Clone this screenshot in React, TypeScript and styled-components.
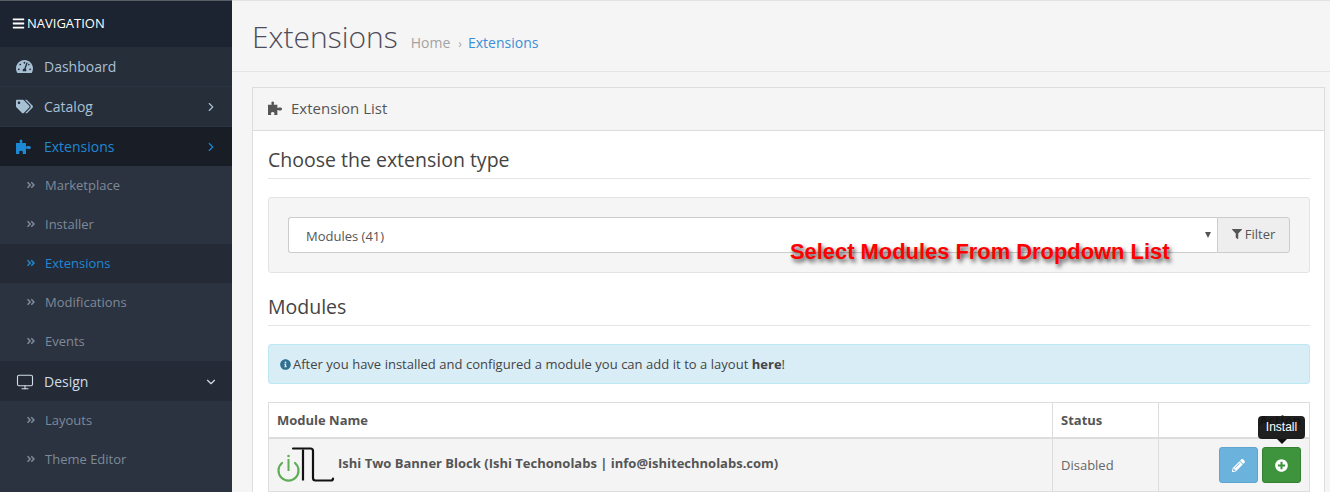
import React from "react";
import styled, { createGlobalStyle } from "styled-components";
import { FaAngleDoubleRight, FaBars, FaTags, FaFilter, FaPencilAlt, FaPlusCircle, FaInfoCircle, FaTachometerAlt } from "react-icons/fa";
import { ChevronRight, ChevronDown, Monitor } from "lucide-react";

const Global = createGlobalStyle`
  html, body { margin: 0; padding: 0; height: 100%; overflow: hidden; background: #f5f5f5; }
  body { font-family: "Open Sans", sans-serif; font-size: 13px; color: #4d4d4d; }
`;

const Page = styled.div`
  display: flex; width: 1330px; height: 492px; overflow: hidden; background: #f5f5f5;
`;
const Sidebar = styled.nav`
  width: 232px; flex: none; background: #2b3240; display: flex; flex-direction: column;
  border-top: 1px solid #5a5f66; box-sizing: border-box;
`;
const NavHeader = styled.div`
  height: 46px; flex: none; background: #1c2331; color: #fff; display: flex; align-items: center;
  padding: 0 0 2px 12px; gap: 2px; font-size: 13px; box-sizing: border-box;
`;
const TopItem = styled.div<{ $state?: "active" | "open" }>`
  height: ${p => (p.$state === "active" ? "39px" : "40px")}; flex: none; display: flex; align-items: center;
  padding: ${p => (p.$state === "open" ? "1px" : "0")} 14px 0 16px; box-sizing: border-box;
  border-bottom: ${p => (p.$state ? "0" : "1px solid #2a3542")};
  background: ${p => (p.$state === "active" ? "#191d26" : p.$state === "open" ? "#252b36" : "#262e3a")};
  color: ${p => (p.$state === "active" ? "#1e88d2" : p.$state === "open" ? "#cfdde8" : "#a8c0d4")};
  font-size: 14px;
`;
const TopIcon = styled.span`
  width: 28px; flex: none; display: flex; align-items: center; font-size: 17px;
`;
const Grow = styled.span`flex: 1;`;
const Arrow = styled.span`display: flex; align-items: center;`;
const SubItem = styled.div<{ $active?: boolean }>`
  height: 39px; flex: none; display: flex; align-items: center; padding: 0 0 2px 26px; gap: 9px; box-sizing: border-box;
  background: ${p => (p.$active ? "#252b36" : "transparent")};
  color: ${p => (p.$active ? "#1e88d2" : "#7d8a99")};
  font-size: 13px;
`;
const SubIcon = styled.span`display: flex; font-size: 10px; width: 10px;`;

const Main = styled.main`
  flex: 1; min-width: 0; display: flex; flex-direction: column;
  border-top: 1px solid #e2e2e2; box-sizing: border-box;
`;
const Header = styled.header`
  height: 71px; flex: none; box-sizing: border-box; border-bottom: 1px solid #e5e5e5;
  padding: 15px 20px 0; display: flex; align-items: flex-start;
`;
const Title = styled.h1`
  margin: 0; font-size: 30px; font-weight: 300; color: #4d4d5a; line-height: 41px;
`;
const Crumbs = styled.div`
  margin: 17px 0 0 13px; display: flex; align-items: baseline; font-size: 14px; line-height: 20px; color: #a3a3a3;
`;
const CrumbSep = styled.span`margin: 0 6px 0 8px; font-size: 12px; color: #aaa;`;
const CrumbLink = styled.span`color: #3b8fd6;`;
const Panel = styled.section`
  margin: 15px 5px 0 20px; border: 1px solid #ddd; background: #fff; flex: 1; min-height: 0;
  border-bottom: 0; position: relative;
`;
const PanelHead = styled.div`
  height: 43px; box-sizing: border-box; background: #f5f5f5; border-bottom: 1px solid #ddd;
  display: flex; align-items: center; padding: 0 0 2px 15px; gap: 8px; font-size: 15px; color: #555;
`;
const PanelBody = styled.div`padding: 15px 14px 0 15px;`;
const SectionTitle = styled.h3<{ $spaced?: boolean }>`
  margin: ${p => (p.$spaced ? "20px" : "0")} 0 18px; font-size: 19.5px; font-weight: 400; color: #444; line-height: 28px;
  border-bottom: 1px solid #e5e5e5; height: 33px; box-sizing: border-box;
`;
const Well = styled.div`
  height: 76px; box-sizing: border-box; background: #f5f5f5; border: 1px solid #e3e3e3; border-radius: 3px;
  padding: 19px; display: flex;
`;
const SelectBox = styled.div`
  flex: 1; height: 36px; box-sizing: border-box; background: #fff; border: 1px solid #ccc; border-right: 0;
  border-radius: 3px 0 0 3px; display: flex; align-items: center; padding: 1px 6px 0 17px; font-size: 13px; color: #555;
`;
const Caret = styled.span`
  width: 0; height: 0; border-style: solid; border-width: 6px 3.5px 0; border-color: #555 transparent transparent;
  margin-bottom: 2px;
`;
const FilterBtn = styled.div`
  width: 73px; height: 36px; box-sizing: border-box; background: #eee; border: 1px solid #ccc; padding-bottom: 2px;
  border-radius: 0 3px 3px 0; display: flex; align-items: center; justify-content: center; gap: 3px; font-size: 13px; color: #555;
`;
const Alert = styled.div`
  height: 40px; box-sizing: border-box; background: #d9edf7; border: 1px solid #bce8f1; border-radius: 3px;
  color: #31708f; display: flex; align-items: center; padding-left: 11px; gap: 2px; font-size: 13px; margin-bottom: 18px;
`;
const AlertText = styled.span`color: #444; word-spacing: 0.13px; b { font-weight: 700; }`;
const Table = styled.div`border: 1px solid #ddd; border-bottom: 0; font-size: 13px;`;
const Row = styled.div<{ $head?: boolean }>`
  display: grid; grid-template-columns: 784px 106px 1fr;
  height: ${p => (p.$head ? "34px" : "52px")};
  background: ${p => (p.$head ? "#fff" : "#f4f4f4")};
  border-bottom: ${p => (p.$head ? "2px solid #ddd" : "1px solid #ddd")};
`;
const Cell = styled.div<{ $last?: boolean; $bold?: boolean }>`
  display: flex; align-items: center; padding: 0 8px; font-weight: ${p => (p.$bold ? 700 : 400)};
  color: ${p => (p.$bold ? "#555" : "#666")};
  border-right: ${p => (p.$last ? "0" : "1px solid #ddd")};
`;
const ActionCell = styled(Cell)`justify-content: flex-end; gap: 4px;`;
const ModName = styled.span`font-weight: 700; color: #555; margin-left: 3px; margin-top: -4px;`;
const ActBtn = styled.div<{ $green?: boolean }>`
  width: 39px; height: 36px; box-sizing: border-box; border-radius: 3px; color: #fff;
  display: flex; align-items: center; justify-content: center; font-size: 13px;
  background: ${p => (p.$green ? "#3d943c" : "#6bb3dd")};
  border: 1px solid ${p => (p.$green ? "#357f35" : "#5ea6d0")};
`;
const Callout = styled.div`
  position: absolute; left: 537px; top: 152px; font-family: "Liberation Sans", sans-serif; font-weight: 700;
  font-size: 21.9px; line-height: 24px; color: #f00; text-shadow: 2px 3px 4px rgba(0,0,0,.7); white-space: nowrap;
`;
const Tooltip = styled.div`
  position: absolute; left: 1005px; top: 328px; width: 47px; height: 23px; box-sizing: border-box; padding-bottom: 2px;
  background: rgba(17,17,17,.94); color: #fff; font-weight: 400;
  border-radius: 4px; font-family: "Liberation Sans", sans-serif; font-size: 12px;
  display: flex; align-items: center; justify-content: center;
  &::after { content: ""; position: absolute; left: 19px; bottom: -5px; border: 5px solid transparent; border-bottom: 0; border-top-color: #111; }
`;

const Puzzle = ({ size = 16 }: { size?: number }) => (
  <svg width={size} height={size} viewBox="0 0 16 16" fill="currentColor" style={{ flex: "none" }}>
    <path d="M0 4h3.500c.6 0 .6-.5.3-1-.7-1 0-2.500 1.200-2.500S7 2 6.300 3c-.3.5-.3 1 .3 1H10v3c0 .6.5.6 1 .3 1-.7 4-.4 4 1.200S12 10.500 11 9.800c-.5-.3-1-.3-1 .3V15H7c-.6 0-.6-.5-.3-1 .5-1 0-2.300-1.700-2.300S2.800 13 3.300 14c.3.5.3 1-.3 1H0z" />
  </svg>
);

const Logo = () => (
  <svg width="58" height="38" viewBox="0 0 58 38" fill="none" style={{ flex: "none" }}>
    <path d="M5 17a10 10 0 1 0 13 0" stroke="#5fae57" strokeWidth="2.200" strokeLinecap="round" />
    <path d="M11.500 13v12" stroke="#5fae57" strokeWidth="2" />
    <circle cx="11.500" cy="10" r="1.300" fill="#5fae57" />
    <path d="M16 2.500h17.500a2.500 2.500 0 0 1 2.500 2.500V32a2.500 2.500 0 0 0 2.500 2.500h15.500q2 0 2-2" stroke="#111" strokeWidth="2.200" strokeLinecap="round" />
    <path d="M26 3.500v31" stroke="#111" strokeWidth="2.200" />
  </svg>
);

const subs1 = ["Marketplace", "Installer", "Extensions", "Modifications", "Events"];

export default function App() {
  return (
    <Page>
      <Global />
      <Sidebar>
        <NavHeader><FaBars size={13} /> NAVIGATION</NavHeader>
        <TopItem><TopIcon><FaTachometerAlt /></TopIcon>Dashboard</TopItem>
        <TopItem><TopIcon><FaTags /></TopIcon>Catalog<Grow /><Arrow><ChevronRight size={14} /></Arrow></TopItem>
        <TopItem $state="active"><TopIcon><Puzzle /></TopIcon>Extensions<Grow /><Arrow><ChevronRight size={14} /></Arrow></TopItem>
        {subs1.map(s => (
          <SubItem key={s} $active={s === "Extensions"}><SubIcon><FaAngleDoubleRight /></SubIcon>{s}</SubItem>
        ))}
        <TopItem $state="open"><TopIcon><Monitor size={18} strokeWidth={1.5} /></TopIcon>Design<Grow /><Arrow><ChevronDown size={14} /></Arrow></TopItem>
        <SubItem><SubIcon><FaAngleDoubleRight /></SubIcon>Layouts</SubItem>
        <SubItem><SubIcon><FaAngleDoubleRight /></SubIcon>Theme Editor</SubItem>
      </Sidebar>
      <Main>
        <Header>
          <Title>Extensions</Title>
          <Crumbs>Home<CrumbSep>›</CrumbSep><CrumbLink>Extensions</CrumbLink></Crumbs>
        </Header>
        <Panel>
          <PanelHead><Puzzle size={15} />Extension List</PanelHead>
          <PanelBody>
            <SectionTitle>Choose the extension type</SectionTitle>
            <Well>
              <SelectBox>Modules (41)<Grow /><Caret /></SelectBox>
              <FilterBtn><FaFilter size={10} />Filter</FilterBtn>
            </Well>
            <SectionTitle $spaced>Modules</SectionTitle>
            <Alert><FaInfoCircle size={11} /><AlertText>After you have installed and configured a module you can add it to a layout <b>here</b>!</AlertText></Alert>
            <Table>
              <Row $head>
                <Cell $bold>Module Name</Cell>
                <Cell $bold>Status</Cell>
                <ActionCell $last $bold>Action</ActionCell>
              </Row>
              <Row>
                <Cell><Logo /><ModName>Ishi Two Banner Block (Ishi Techonolabs | info@ishitechnolabs.com)</ModName></Cell>
                <Cell>Disabled</Cell>
                <ActionCell $last>
                  <ActBtn><FaPencilAlt /></ActBtn>
                  <ActBtn $green><FaPlusCircle /></ActBtn>
                </ActionCell>
              </Row>
            </Table>
          </PanelBody>
          <Callout>Select Modules From Dropdown List</Callout>
          <Tooltip>Install</Tooltip>
        </Panel>
      </Main>
    </Page>
  );
}
